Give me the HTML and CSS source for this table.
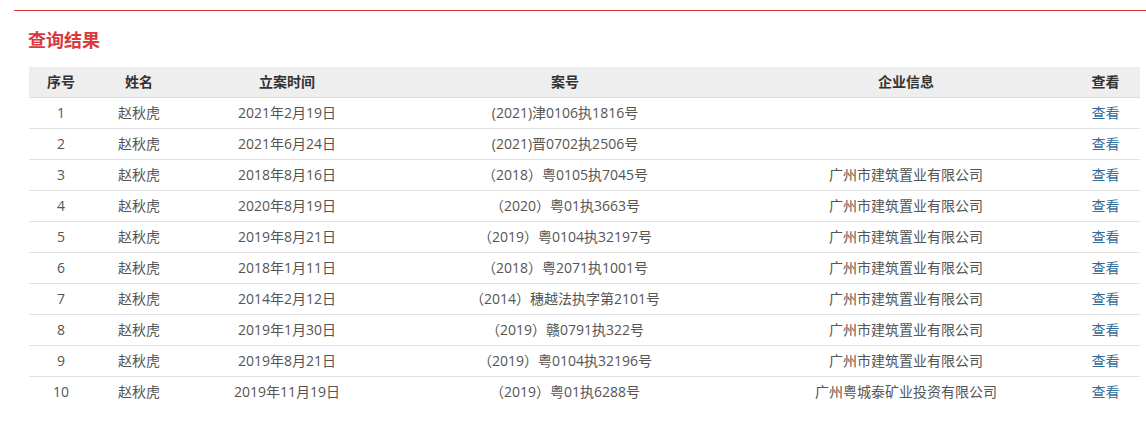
FILE: index.html
```html
<!DOCTYPE html>
<html>
<head>
<meta charset="utf-8">
<link rel="stylesheet" href="styles.css">
</head>
<body>
<div class="page">
  <div class="topline"></div>
  <h2 class="title">查询结果</h2>
  <table class="result">
    <colgroup>
      <col class="c1"><col class="c2"><col class="c3"><col class="c4"><col class="c5"><col class="c6">
    </colgroup>
    <thead>
      <tr><th>序号</th><th>姓名</th><th>立案时间</th><th>案号</th><th>企业信息</th><th>查看</th></tr>
    </thead>
    <tbody>
      <tr><td>1</td><td>赵秋虎</td><td>2021年2月19日</td><td>(2021)津0106执1816号</td><td></td><td><a class="view">查看</a></td></tr>
      <tr><td>2</td><td>赵秋虎</td><td>2021年6月24日</td><td>(2021)晋0702执2506号</td><td></td><td><a class="view">查看</a></td></tr>
      <tr><td>3</td><td>赵秋虎</td><td>2018年8月16日</td><td>（2018）粤0105执7045号</td><td>广州市建筑置业有限公司</td><td><a class="view">查看</a></td></tr>
      <tr><td>4</td><td>赵秋虎</td><td>2020年8月19日</td><td>（2020）粤01执3663号</td><td>广州市建筑置业有限公司</td><td><a class="view">查看</a></td></tr>
      <tr><td>5</td><td>赵秋虎</td><td>2019年8月21日</td><td>（2019）粤0104执32197号</td><td>广州市建筑置业有限公司</td><td><a class="view">查看</a></td></tr>
      <tr><td>6</td><td>赵秋虎</td><td>2018年1月11日</td><td>（2018）粤2071执1001号</td><td>广州市建筑置业有限公司</td><td><a class="view">查看</a></td></tr>
      <tr><td>7</td><td>赵秋虎</td><td>2014年2月12日</td><td>（2014）穗越法执字第2101号</td><td>广州市建筑置业有限公司</td><td><a class="view">查看</a></td></tr>
      <tr><td>8</td><td>赵秋虎</td><td>2019年1月30日</td><td>（2019）赣0791执322号</td><td>广州市建筑置业有限公司</td><td><a class="view">查看</a></td></tr>
      <tr><td>9</td><td>赵秋虎</td><td>2019年8月21日</td><td>（2019）粤0104执32196号</td><td>广州市建筑置业有限公司</td><td><a class="view">查看</a></td></tr>
      <tr class="last"><td>10</td><td>赵秋虎</td><td>2019年11月19日</td><td>（2019）粤01执6288号</td><td>广州粤城泰矿业投资有限公司</td><td><a class="view">查看</a></td></tr>
    </tbody>
  </table>
</div>
</body>
</html>
```

FILE: styles.css
```css
html, body {
  margin: 0;
  padding: 0;
  background: #fff;
}
body {
  font-family: "Open Sans", "Noto Sans CJK SC", sans-serif;
  color: #555;
}
.page {
  padding: 10px 0 0 14px;
}
.topline {
  height: 1px;
  background: #d0363b;
}
.title {
  margin: 16px 0 0 14px;
  height: 25px;
  line-height: 25px;
  font-family: "Noto Sans CJK SC", sans-serif;
  font-size: 18px;
  font-weight: 700;
  color: #d83a3f;
}
.result {
  margin: 15px 0 0 15px;
  width: 1111px;
  border-collapse: collapse;
  table-layout: fixed;
  font-size: 14px;
  line-height: 20px;
}
.c1 { width: 64px; }
.c2 { width: 92px; }
.c3 { width: 204px; }
.c4 { width: 352px; }
.c5 { width: 330px; }
.c6 { width: 69px; }
.result th {
  height: 30px;
  padding: 0;
  background: #eeeeee;
  border-bottom: 1px solid #dcdcdc;
  color: #333;
  font-weight: 700;
  text-align: center;
}
.result td {
  height: 30px;
  padding: 0;
  text-align: center;
  border-bottom: 1px solid #e2e2e2;
  white-space: nowrap;
}
.result tr.last td {
  border-bottom: none;
}
.view {
  color: #2f6c99;
  cursor: pointer;
}
```
